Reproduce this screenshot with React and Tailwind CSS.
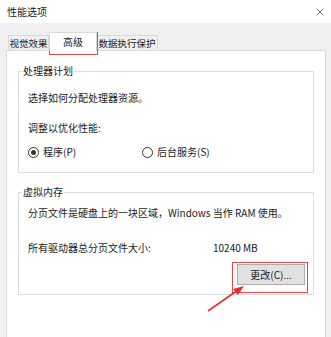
import { X } from 'lucide-react';

const FONT = 'font-["Noto_Sans_CJK_SC","Microsoft_YaHei",sans-serif]';

function GroupBox({ title, className = '', children }) {
  return (
    <div className={`relative border border-[#dcdcdc] ${className}`}>
      <span className="absolute left-[3px] top-[-8px] bg-white px-[1px] text-[10px] leading-[14px] text-[#1a1a1a]">
        {title}
      </span>
      {children}
    </div>
  );
}

function Radio({ checked, label }) {
  return (
    <div className="flex items-center gap-[4px]">
      <span className="flex h-[11px] w-[11px] items-center justify-center rounded-full border border-[#333]">
        {checked && <span className="h-[5px] w-[5px] rounded-full bg-[#333]" />}
      </span>
      <span>{label}</span>
    </div>
  );
}

export default function App() {
  return (
    <div className={`relative h-[337px] w-[331px] overflow-hidden bg-[#f0f0f0] text-[10px] leading-[14px] text-[#1a1a1a] ${FONT}`}>
      {/* Title bar */}
      <div className="flex h-[23px] items-center justify-between bg-white pl-[7px] pr-[5px]">
        <span className="text-[10px]">性能选项</span>
        <X size={12} strokeWidth={1.2} className="text-[#222]" />
      </div>

      {/* Tabs */}
      <div className="flex h-[27px] items-end whitespace-nowrap pl-[8px] text-[9.5px]">
        <div className="flex h-[15px] w-[41px] items-center justify-center border border-b-0 border-[#d9d9d9] bg-[#f0f0f0]">
          视觉效果
        </div>
        <div className="relative z-10 -mb-px flex h-[19px] w-[48px] items-start justify-center border border-b-0 border-[#d9d9d9] bg-white pt-[2px] text-[10px]">
          高级
        </div>
        <div className="flex h-[15px] w-[61px] items-center justify-center border border-b-0 border-l-0 border-[#d9d9d9] bg-[#f0f0f0]">
          数据执行保护
        </div>
      </div>

      {/* Tab panel */}
      <div className="ml-[6px] h-[300px] w-[320px] border border-[#d9d9d9] bg-white pl-[11px] pt-[20px]">
        <GroupBox title="处理器计划" className="h-[102px] w-[296px] pl-[9px] pt-[19px]">
          <div>选择如何分配处理器资源。</div>
          <div className="mt-[16px]">调整以优化性能:</div>
          <div className="mt-[10px] flex">
            <div className="w-[114px]">
              <Radio checked label="程序(P)" />
            </div>
            <Radio label="后台服务(S)" />
          </div>
        </GroupBox>

        <GroupBox title="虚拟内存" className="mt-[19px] h-[103px] w-[296px] pl-[9px] pt-[13px]">
          <div>分页文件是硬盘上的一块区域，Windows 当作 RAM 使用。</div>
          <div className="mt-[21px] flex">
            <span className="w-[185px]">所有驱动器总分页文件大小:</span>
            <span>10240 MB</span>
          </div>
          <div className="mt-[9px] flex justify-end pr-[8px]">
            <button className="h-[21px] w-[68px] border border-[#adadad] bg-[#e1e1e1] text-[10px]">
              更改(C)...
            </button>
          </div>
        </GroupBox>
      </div>

      {/* Annotations */}
      <div className="absolute left-[49px] top-[32px] h-[23px] w-[49px] border border-[#ee4444]" />
      <div className="absolute left-[232px] top-[262px] h-[31px] w-[76px] border border-[#ee4444]" />
      <svg className="absolute left-0 top-0" width="331" height="337">
        <line x1="208" y1="311" x2="238" y2="290" stroke="#e63030" strokeWidth="1.6" />
        <polygon points="244,286 233,289 238,295" fill="#e63030" />
      </svg>
    </div>
  );
}
